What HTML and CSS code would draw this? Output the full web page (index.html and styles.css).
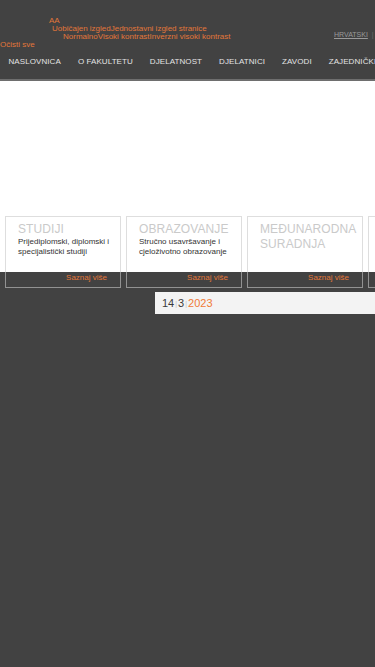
FILE: index.html
```html
<!DOCTYPE html>
<html lang="hr">
<head>
<meta charset="utf-8">
<title>Fakultet</title>
<link rel="stylesheet" href="styles.css">
</head>
<body>
<header class="top">
  <div class="a11y">
    <div class="a11y-line l1">AA</div>
    <div class="a11y-line l2"><span>Uobičajen izgled</span><span>Jednostavni izgled stranice</span></div>
    <div class="a11y-line l3"><span>Normalno</span><span>Visoki kontrast</span><span>Inverzni visoki kontrast</span></div>
    <div class="a11y-line l4">Očisti sve</div>
  </div>
  <div class="lang"><a href="#" class="lang-link">HRVATSKI</a><span class="lang-sep">|</span></div>
</header>
<nav class="nav">
  <a href="#" class="nav-item">NASLOVNICA</a>
  <a href="#" class="nav-item">O FAKULTETU</a>
  <a href="#" class="nav-item">DJELATNOST</a>
  <a href="#" class="nav-item">DJELATNICI</a>
  <a href="#" class="nav-item">ZAVODI</a>
  <a href="#" class="nav-item">ZAJEDNIČKE</a>
</nav>
<section class="hero"></section>
<section class="cards">
  <div class="card">
    <div class="card-title">STUDIJI</div>
    <div class="card-desc">Prijediplomski, diplomski i specijalistički studiji</div>
    <a href="#" class="card-link">Saznaj više</a>
  </div>
  <div class="card">
    <div class="card-title">OBRAZOVANJE</div>
    <div class="card-desc">Stručno usavršavanje i cjeloživotno obrazovanje</div>
    <a href="#" class="card-link">Saznaj više</a>
  </div>
  <div class="card">
    <div class="card-title">MEĐUNARODNA SURADNJA</div>
    <a href="#" class="card-link">Saznaj više</a>
  </div>
  <div class="card card-edge"></div>
</section>
<div class="date"><span class="d-num">14</span><span class="d-sep">|</span><span class="d-num">3</span><span class="d-sep">|</span><span class="d-year">2023</span></div>
</body>
</html>
```
FILE: styles.css
```css
html, body {
  margin: 0;
  padding: 0;
}
body {
  background: #424242;
  font-family: "Liberation Sans", Arial, sans-serif;
  width: 375px;
  overflow: hidden;
  min-height: 667px;
}
a { text-decoration: none; }

.top {
  display: flex;
  justify-content: space-between;
  padding-top: 17px;
  height: 32px;
}
.a11y {
  color: #e2773a;
  font-size: 8px;
  line-height: 8px;
  white-space: nowrap;
}
.l1 { padding-left: 49px; }
.l2 { padding-left: 52px; }
.l3 { padding-left: 63px; }
.l4 { padding-left: 0; }

.lang {
  display: flex;
  gap: 4px;
  font-size: 7px;
  line-height: 8px;
  margin-top: 14px;
  white-space: nowrap;
  width: 41px;
  overflow: hidden;
}
.lang-link {
  color: #9a9a9a;
  text-decoration: underline;
}
.lang-sep { color: #6a6a6a; }

.nav {
  display: flex;
  white-space: nowrap;
  overflow: hidden;
  padding: 9px 0 13px 0;
  border-bottom: 2px solid #6e6e6e;
}
.nav-item {
  flex: none;
  color: #e4e4e4;
  font-size: 8px;
  line-height: 8px;
  letter-spacing: 0.08px;
  padding: 0 8.5px;
}

.hero {
  background: #ffffff;
  height: 191px;
}

.cards {
  display: flex;
  gap: 5px;
  padding-left: 5px;
  margin-top: -56px;
  overflow: hidden;
}
.card {
  flex: none;
  box-sizing: border-box;
  width: 116px;
  height: 72px;
  border: 1px solid rgba(200, 200, 200, 0.6);
  padding: 5px 4px 4px 12px;
  display: flex;
  flex-direction: column;
}
.card-title {
  color: #cacaca;
  font-size: 12px;
  line-height: 15px;
  letter-spacing: 0.1px;
}
.card-desc {
  color: #333333;
  font-size: 8px;
  line-height: 9.5px;
}
.card-link {
  margin-top: auto;
  margin-right: 9px;
  align-self: flex-end;
  color: #e2773a;
  font-size: 8px;
  line-height: 10px;
}

.date {
  margin: 4px 0 0 155px;
  height: 22px;
  background: #f3f3f3;
  display: flex;
  align-items: center;
  padding-left: 7px;
  font-size: 11px;
}
.d-num { color: #3a3a3a; }
.d-year { color: #f07a38; }
.d-sep {
  color: #c4c4c4;
  font-size: 7px;
  margin: 0 1px;
}
```
